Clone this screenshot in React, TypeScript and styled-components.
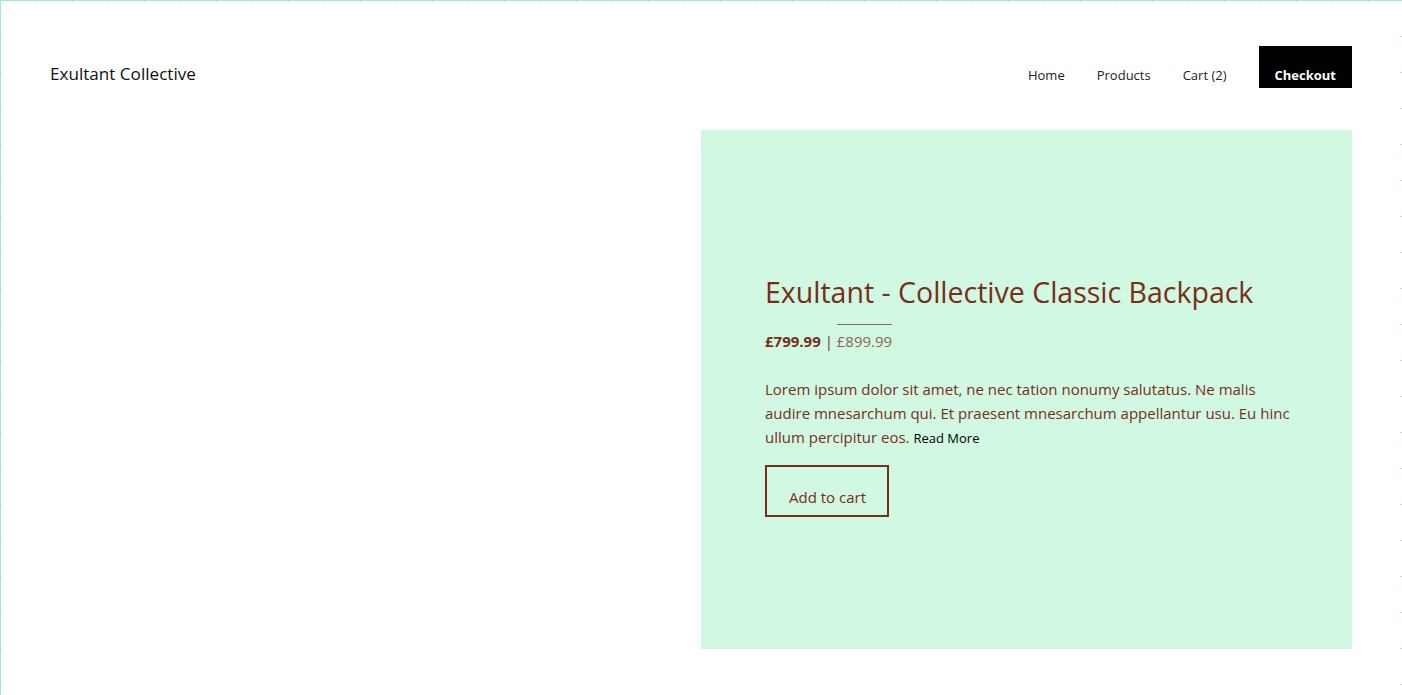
import React from "react";
import styled, { createGlobalStyle } from "styled-components";

const tick = "#9fead6";

const GlobalStyle = createGlobalStyle`
  html, body { margin: 0; padding: 0; }
  body {
    min-height: 100vh;
    font-family: "Open Sans", "Noto Sans", sans-serif;
    color: #222;
    background-color: #fff;
    background-image:
      linear-gradient(${tick}, ${tick}),
      linear-gradient(${tick}, ${tick}),
      linear-gradient(to right, ${tick} 1px, transparent 1px),
      linear-gradient(to bottom, ${tick} 1px, transparent 1px),
      linear-gradient(to bottom, ${tick} 1px, transparent 1px);
    background-size: 100% 1px, 1px 100%, 36px 2px, 2px 36px, 2px 36px;
    background-position: 0 0, 0 0, 0 0, 0 0, right 0 top 0;
    background-repeat: no-repeat, no-repeat, repeat-x, repeat-y, repeat-y;
  }
`;

const Page = styled.div`
  padding: 46px 50px 46px;
`;

const Header = styled.header`
  display: flex;
  align-items: baseline;
  justify-content: space-between;
  height: 42px;
`;

const Logo = styled.a`
  font-size: 17.1px;
  color: #111;
  text-decoration: none;
`;

const Nav = styled.nav`
  display: flex;
  align-items: baseline;
  gap: 32px;
`;

const NavLink = styled.a`
  font-size: 13px;
  color: #222;
  text-decoration: none;
`;

const CheckoutButton = styled.button`
  height: 42px;
  box-sizing: border-box;
  padding: 21px 16px 5px;
  background: #000;
  color: #fff;
  border: none;
  font-family: inherit;
  font-weight: 700;
  font-size: 13px;
  line-height: 16px;
  cursor: pointer;
`;

const Product = styled.section`
  display: grid;
  grid-template-columns: 1fr 1fr;
  margin-top: 42px;
`;

const ImageArea = styled.div``;

const Panel = styled.div`
  background: #d0f8e3;
  height: 519px;
  box-sizing: border-box;
  padding: 5px 56px 0 64px;
  display: flex;
  flex-direction: column;
  justify-content: center;
  color: #7a2e16;
`;

const Title = styled.h1`
  margin: 6px 0 0;
  font-weight: 400;
  font-size: 28.5px;
  line-height: 36px;
  color: #7a2e16;
`;

const Prices = styled.div`
  margin-top: 20px;
  font-size: 15px;
  line-height: 22px;
`;

const Sale = styled.strong`
  font-weight: 700;
`;

const Was = styled.span`
  position: relative;
  color: #8f6552;
  &::before {
    content: "";
    position: absolute;
    left: 0;
    right: 0;
    top: -7px;
    border-top: 1px solid #8f6552;
  }
`;

const Description = styled.p`
  margin: 25px 0 0;
  font-size: 15px;
  line-height: 24px;
`;

const ReadMore = styled.a`
  font-size: 13px;
  line-height: 16px;
  color: #000;
  text-decoration: none;
`;

const AddButton = styled.button`
  align-self: flex-start;
  margin-top: 16px;
  padding: 18px 21px 6px 22px;
  border: 2px solid #7a2e16;
  background: transparent;
  color: #7a2e16;
  font-family: inherit;
  font-size: 15px;
  line-height: 24px;
  cursor: pointer;
`;

export default function App() {
  return (
    <>
      <GlobalStyle />
      <Page>
        <Header>
          <Logo href="#">Exultant Collective</Logo>
          <Nav>
            <NavLink href="#">Home</NavLink>
            <NavLink href="#">Products</NavLink>
            <NavLink href="#">Cart (2)</NavLink>
            <CheckoutButton>Checkout</CheckoutButton>
          </Nav>
        </Header>
        <Product>
          <ImageArea />
          <Panel>
            <Title>Exultant - Collective Classic Backpack</Title>
            <Prices>
              <Sale>£799.99</Sale> | <Was>£899.99</Was>
            </Prices>
            <Description>
              Lorem ipsum dolor sit amet, ne nec tation nonumy salutatus. Ne malis audire
              mnesarchum qui. Et praesent mnesarchum appellantur usu. Eu hinc ullum
              percipitur eos. <ReadMore href="#">Read More</ReadMore>
            </Description>
            <AddButton>Add to cart</AddButton>
          </Panel>
        </Product>
      </Page>
    </>
  );
}
